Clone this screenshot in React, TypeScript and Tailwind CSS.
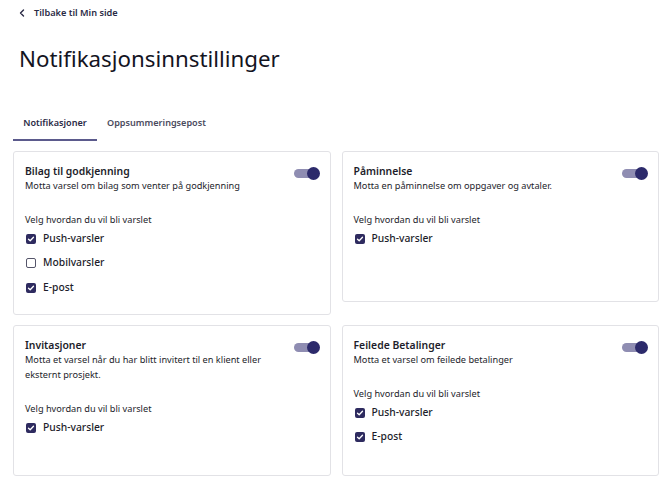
import { ReactNode } from 'react';

type Option = {
    label: string;
    checked: boolean;
};

type Setting = {
    title: string;
    description: ReactNode;
    options: Option[];
};

const settings: Setting[] = [
    {
        title: 'Bilag til godkjenning',
        description: 'Motta varsel om bilag som venter på godkjenning',
        options: [
            { label: 'Push-varsler', checked: true },
            { label: 'Mobilvarsler', checked: false },
            { label: 'E-post', checked: true },
        ],
    },
    {
        title: 'Påminnelse',
        description: 'Motta en påminnelse om oppgaver og avtaler.',
        options: [{ label: 'Push-varsler', checked: true }],
    },
    {
        title: 'Invitasjoner',
        description: (
            <>
                Motta et varsel når du har blitt invitert til en klient eller
                <br />
                eksternt prosjekt.
            </>
        ),
        options: [{ label: 'Push-varsler', checked: true }],
    },
    {
        title: 'Feilede Betalinger',
        description: 'Motta et varsel om feilede betalinger',
        options: [
            { label: 'Push-varsler', checked: true },
            { label: 'E-post', checked: true },
        ],
    },
];

const Toggle = () => (
    <div className="relative w-[26px] h-[13px] shrink-0">
        <div className="absolute left-0 top-[2px] w-[24px] h-[9px] rounded-full bg-[#8f8db2]" />
        <div className="absolute right-0 top-0 w-[13px] h-[13px] rounded-full bg-[#2c2a6b]" />
    </div>
);

const Checkbox = ({ checked }: { checked: boolean }) =>
    checked ? (
        <span className="w-[10px] h-[10px] rounded-[2px] bg-[#2e2b5f] flex items-center justify-center">
            <svg width="8" height="8" viewBox="0 0 8 8" fill="none">
                <path d="M1.5 4.2 L3.2 5.8 L6.5 2.3" stroke="white" strokeWidth="1.3" strokeLinecap="round" strokeLinejoin="round" />
            </svg>
        </span>
    ) : (
        <span className="w-[10px] h-[10px] rounded-[2px] border border-[#55556a] bg-white" />
    );

const SettingCard = ({ setting }: { setting: Setting }) => (
    <div className="bg-white border border-[#e2e2e6] rounded-[3px] min-h-[151px] pl-[11px] pr-[10px] pt-[11px] pb-[19px]">
        <div className="flex items-start justify-between">
            <div>
                <p className="text-[10.4px] leading-[16px] font-semibold text-[#1d1d2b]">{setting.title}</p>
                <p className="text-[9.2px] leading-[15px] text-[#1d1d2b] mt-[-1px]">{setting.description}</p>
            </div>
            <div className="mt-[4px]">
                <Toggle />
            </div>
        </div>
        <p className="text-[9.2px] leading-[15px] text-[#1d1d2b] mt-[19px]">Velg hvordan du vil bli varslet</p>
        <div className="flex flex-col gap-[9.5px] mt-[4px]">
            {setting.options.map((o) => (
                <label key={o.label} className="flex items-center gap-[7px] h-[15px] pl-[1px]">
                    <Checkbox checked={o.checked} />
                    <span className="text-[10.3px] text-[#1d1d2b] font-medium">{o.label}</span>
                </label>
            ))}
        </div>
    </div>
);

const App = () => {
    return (
        <div className="w-[670px] h-[494px] bg-white overflow-hidden font-['Noto_Sans',sans-serif] text-[#1d1d2b]">
            <div className="pl-[13px] pr-[11px] pt-[6px]">
                <a className="flex items-center gap-[9px] pl-[6px] h-[14px] text-[9.2px] font-semibold text-[#2a2a45]">
                    <svg width="6" height="8" viewBox="0 0 6 8" fill="none">
                        <path d="M4.5 1 L1.5 4 L4.5 7" stroke="#2a2a45" strokeWidth="1.4" strokeLinecap="round" strokeLinejoin="round" />
                    </svg>
                    Tilbake til Min side
                </a>
                <h1 className="text-[22.3px] leading-[32px] font-normal text-[#14141f] mt-[23px] pl-[6px]">Notifikasjonsinnstillinger</h1>
                <div className="flex mt-[40px] h-[26px]">
                    <div className="w-[84px] flex flex-col">
                        <span className="text-[9.1px] leading-[14px] font-semibold text-[#2a2a45] text-center pt-[1px]">Notifikasjoner</span>
                        <div className="mt-auto h-[2px] bg-[#5b5a8c]" />
                    </div>
                    <span className="ml-[10px] text-[9.1px] leading-[14px] font-semibold text-[#4b4b5e] pt-[1px]">Oppsummeringsepost</span>
                </div>
                <div className="grid grid-cols-2 gap-x-[11px] gap-y-[10px] items-start mt-[10px]">
                    {settings.map((s) => (
                        <SettingCard key={s.title} setting={s} />
                    ))}
                </div>
            </div>
        </div>
    );
};

export default App;
